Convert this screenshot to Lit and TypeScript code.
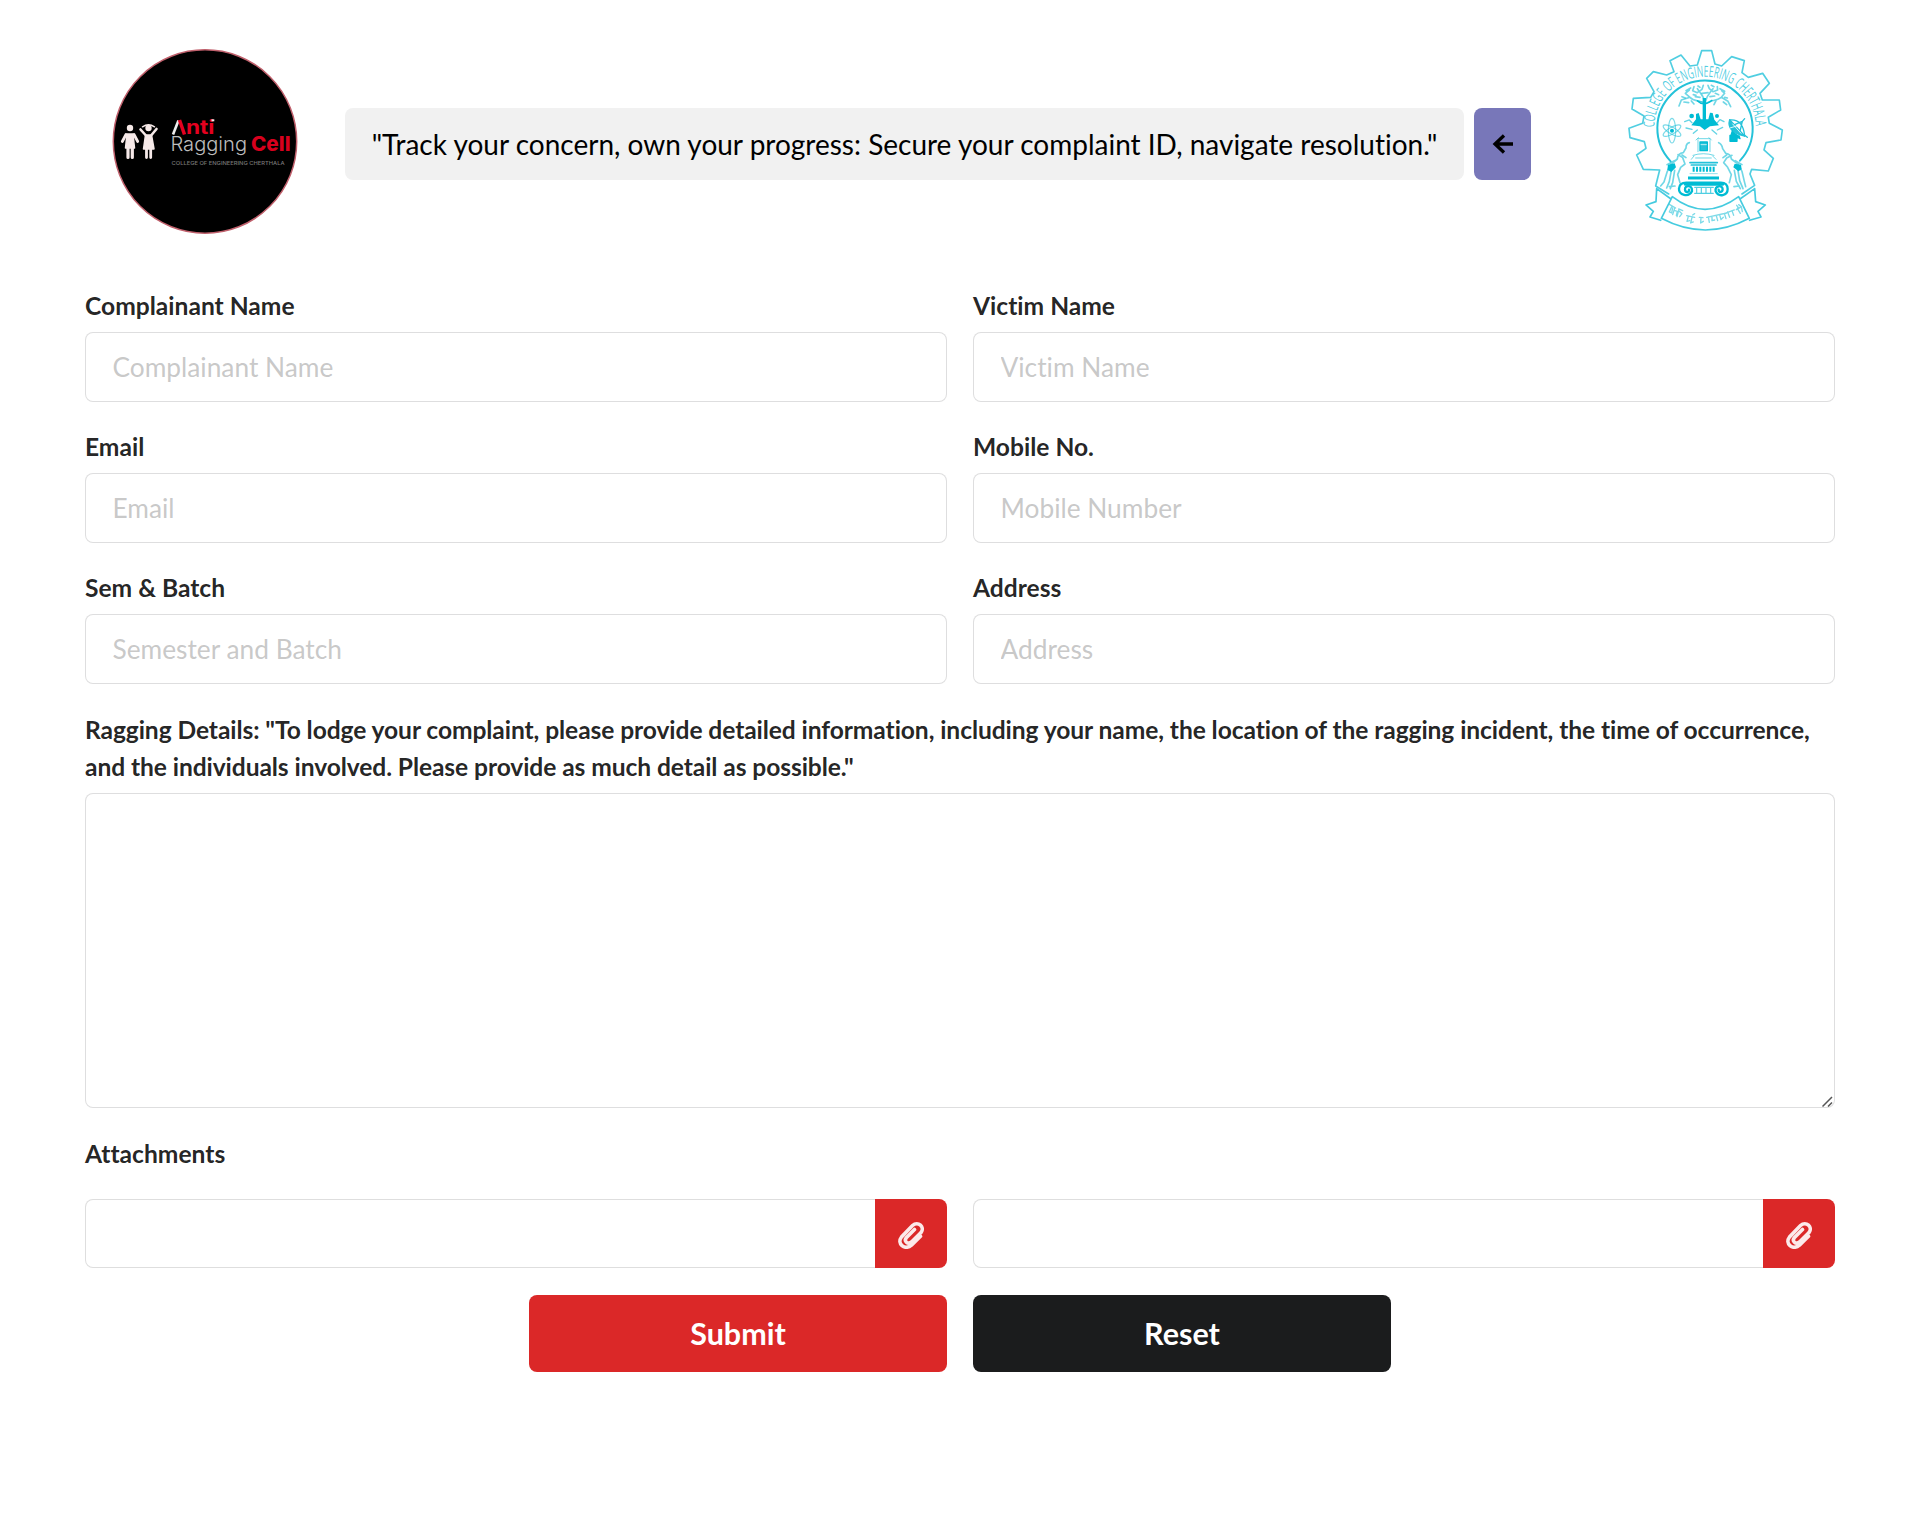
import { LitElement, html, css, svg } from "lit";
import { customElement } from "lit/decorators.js";

/** Gear outline, open at the bottom where the ribbon sits. */
const GEAR =
  "M176 462L137 438 149 390 100 388 80 345 108 325 103 305 60 293 57 265 98 250 102 228 66 207 70 175 122 172 132 155 110 115 130 95 170 105 192 95 180 62 213 45 240 78 262 75 275 32 305 32 315 72 335 78 365 50 403 62 396 98 415 112 458 100 478 130 450 160 457 180 508 180 512 210 475 232 478 250 517 270 513 300 468 308 462 330 490 355 475 393 425 388 420 402 434 436 396 462";

@customElement("app-root")
export class AppRoot extends LitElement {
  static styles = css`
    :host { display: block; font-family: Lato, "Liberation Sans", sans-serif; font-variant-ligatures: none; background: #fff; color: rgba(0,0,0,.87); }
    * { box-sizing: border-box; }
    .page { padding: 46px 85px 0; height: 1535px; }
    .header { display: flex; align-items: center; height: 190px; padding-left: 25px; }
    .logo { width: 190px; height: 190px; flex: none; }
    .statement { margin: 6px 0 0 45px; width: 1119px; height: 72px; background: #f1f1f1; border-radius: 8px; display: flex; align-items: center; justify-content: center; font-size: 28px; color: #000; white-space: nowrap; }
    .back { margin: 6px 0 0 10px; width: 57px; height: 72px; border: 0; padding: 0; border-radius: 8px; background: #7877b9; display: flex; align-items: center; justify-content: center; }
    .emblem { width: 190px; height: 200px; margin: -2px 0 0 79px; flex: none; }
    .form { margin-top: 50.500px; display: grid; grid-template-columns: 1fr 1fr; column-gap: 26px; }
    .field { height: 141px; display: flex; flex-direction: column; }
    .label { font-weight: 700; font-size: 24.600px; line-height: 37.400px; display: block; }
    .long { letter-spacing: -.085px; padding-top: 1px; }
    .input { font: 400 26.300px/32px Lato, sans-serif; font-variant-ligatures: none; height: 70px; width: 100%; margin-top: 8px; padding: 0 26.500px; border: 1px solid rgba(34,36,38,.15); border-radius: 8px; outline: 0; background: #fff; }
    .input::placeholder { color: rgba(191,191,191,.87); }
    .wide { grid-column: 1 / -1; }
    .area-box { position: relative; margin-top: 7.500px; }
    .area { display: block; width: 100%; height: 315.500px; border: 1px solid rgba(34,36,38,.15); border-radius: 8px; resize: none; outline: 0; }
    .grip { position: absolute; right: 2px; bottom: 1px; width: 11px; height: 11px; }
    .attach { margin-top: 26.600px; height: 64px; }
    .file { display: flex; height: 69.500px; }
    .file .input { margin: 0; flex: 1; min-width: 0; height: auto; border-right: 0; border-radius: 8px 0 0 8px; }
    .clip { width: 72px; border: 0; padding: 2px 0 0; background: #db2828; border-radius: 0 8px 8px 0; display: flex; align-items: center; justify-content: center; }
    .actions { display: flex; justify-content: center; gap: 26px; margin-top: 26.500px; }
    .btn { width: 418px; height: 77px; border: 0; border-radius: 8px; color: #fff; font: 700 30.500px/1 Lato, sans-serif; }
    .submit { background: #db2828; }
    .reset { background: #1b1c1d; }
    .wordmark { font-family: Inter, Lato, sans-serif; }
    .motto { font-family: "Open Sans", Lato, sans-serif; }
  `;

  private field(label: string, placeholder: string) {
    return html`<label class="field"><span class="label">${label}</span><input class="input" placeholder=${placeholder} /></label>`;
  }

  private file() {
    return html`<div class="file"><input class="input" readonly aria-label="Attachment" /><button class="clip" aria-label="Attach">
      <svg width="26" height="28" viewBox="0 0 26 28" fill="none" stroke="#fff" stroke-opacity=".9" stroke-width="3.600" stroke-linecap="round">
        <path d="M22.500 15.200L13.500 24.200C6.500 30 -1.500 22.500 3.500 16L14.500 4.500C20 -.500 27.500 6 22.800 11.800L13.500 21C9.500 24 5.500 20 8.500 16.500L16.500 8.500"/>
      </svg></button></div>`;
  }

  private logo() {
    return svg`
      <circle cx="105" cy="101.500" r="91.700" fill="#000" stroke="#c0606c" stroke-width="1.500"/>
      <g fill="#f6e9e8" stroke="#f6e9e8" stroke-linecap="round" stroke-linejoin="round">
        <circle cx="30" cy="88" r="3.200" stroke="none"/>
        <path d="M27 94H33L34.500 108H25.500Z" stroke-width="1.500"/>
        <path d="M26 94.500L22.300 101.500M34 94.500L37.700 101.500" stroke-width="2.800" fill="none"/>
        <path d="M28 108V117.500M32.300 108V117.500" stroke-width="3.200" fill="none"/>
        <circle cx="48.500" cy="88" r="3.200" stroke="none"/>
        <path d="M45.500 95H51.500L54 109H43.500Z" stroke-width="1.500"/>
        <path d="M45.500 95L40.500 89.500M51.500 95L56.500 89" stroke-width="2.600" fill="none"/>
        <path d="M42.500 86.800Q48.500 82.800 54.500 86.800" stroke-width="1.500" fill="none"/>
        <path d="M46.500 109V117.500M50.700 109V117.500" stroke-width="2.800" fill="none"/>
      </g>
      <path d="M73 94.500L78.500 80.500" stroke="#eee" stroke-width="2.600"/>
      <path d="M79.500 80L84.500 94.500" stroke="#e4001f" stroke-width="3.500"/>
      <g class="wordmark">
        <text x="86" y="94.300" font-size="19" font-weight="700" fill="#e4001f" textLength="28.500" lengthAdjust="spacingAndGlyphs">nti</text>
        <text x="70.500" y="111" font-size="20" font-weight="300" fill="#bdbdbd" textLength="76.500" lengthAdjust="spacingAndGlyphs">Ragging</text>
        <text x="151" y="111" font-size="20.500" font-weight="800" fill="#d8001d" textLength="39.500" lengthAdjust="spacingAndGlyphs">Cell</text>
        <text x="71.500" y="124.500" font-size="5.400" font-weight="500" fill="#777" textLength="113" lengthAdjust="spacingAndGlyphs">COLLEGE OF ENGINEERING CHERTHALA</text>
      </g>
      <path d="M111.500 80.300H114.300" stroke="#eee" stroke-width="2"/>`;
  }

  private emblem() {
    return svg`
      <defs><path id="rim" d="M133 262A152 152 0 0 1 437 262"/></defs>
      <g transform="scale(.3333)" fill="none" stroke="#24c2d9" stroke-width="4" stroke-linejoin="round" stroke-linecap="round">
        <path d=${GEAR} stroke-opacity=".8" stroke-width="5"/>
        <path d="M182 364A143 143 0 1 1 390 362" stroke-width="6"/>
        <text class="motto" fill="#24c2d9" fill-opacity=".8" stroke="none" font-size="46"><textPath href="#rim" textLength="474" lengthAdjust="spacingAndGlyphs">COLLEGE OF ENGINEERING CHERTHALA</textPath></text>

        <!-- tree -->
        <g stroke-width="5" stroke-opacity=".65">
          <path d="M282 190C268 180 252 185 240 172M284 188C282 165 270 160 262 146M286 186C290 165 300 158 309 146M288 190C305 178 318 185 334 172M240 172L214 180 207 198M240 172L226 160 238 150M262 158L248 152 252 140M262 158L276 148 280 136M309 155L298 146 294 136M309 155L323 150 322 140M334 172L344 160 335 152M334 172L354 184 362 200M222 186L236 188M340 186L350 194M244 183L252 192M318 182L312 194M228 152L242 144M330 146L344 154"/>
          <path d="M256 170L270 172M300 170L314 168M266 184L278 186M250 164L258 166M316 160L326 164M276 160L294 158M216 170L226 174M344 172L352 174M264 138L270 142M304 136L312 140"/>
        </g>
        <path d="M283 174V242" stroke="#00bcd4" stroke-width="10" stroke-linecap="butt"/>
        <path d="M262 182Q282 202 306 181" stroke="#00bcd4" stroke-width="4"/>
        <path d="M244 256L258 238 258 222 266 219 272 238 295 238 300 218 308 219 313 239 327 256 300 259 284 270 270 259Z" fill="#00bcd4" stroke="none"/>
        <g fill="#00bcd4" stroke="none"><circle cx="245" cy="228" r="7"/><circle cx="321" cy="228" r="6"/></g>
        <path d="M224 245L238 240 246 248M342 245L330 239 322 248M228 264L246 268M250 280L262 270M322 270L338 262M306 270L320 282" stroke-opacity=".7"/>

        <!-- atom -->
        <g stroke-width="3.500" stroke-opacity=".6">
          <ellipse cx="186" cy="272" rx="30" ry="10" transform="rotate(30 186 272)"/>
          <ellipse cx="186" cy="272" rx="30" ry="10" transform="rotate(-30 186 272)"/>
          <ellipse cx="186" cy="272" rx="37" ry="11" transform="rotate(90 186 272)"/>
        </g>
        <circle cx="186" cy="272" r="6" fill="#00bcd4" stroke="none"/>

        <!-- dish -->
        <path d="M359 239Q348 276 404 288Z" fill="#24c2d9"/>
        <path d="M360 240Q399 237 404 288M374 254L397 244 390 274M397 244L404 236" stroke-width="4"/>
        <path d="M367 273L363 286H360V304H381V291L390 296 387 287" fill="#00bcd4" stroke="#00bcd4"/>
        <path d="M368 252L393 280M360 264L380 258" stroke="#fff" stroke-width="2.500"/>
        <path d="M404 286L412 292"/>

        <!-- monument -->
        <path d="M263 296H300M258 300L266 293M304 300L297 293M264 335V300M300 335V300M249 346Q280 336 312 346M244 358L252 348M308 348L318 358M257 354H304" stroke-width="3" stroke-opacity=".65"/>
        <rect x="270" y="306" width="22" height="26" fill="#24c2d9" stroke="#00bcd4"/>
        <path d="M273 314H289" stroke="#bceff5" stroke-width="3"/>
        <path d="M240 368H322M244 375H318" stroke-width="5"/>
        <path d="M251 380V395M261 380V395M271 380V395M281 380V395M291 380V395M301 380V395M311 380V395" stroke="#00bcd4" stroke-width="6" stroke-linecap="butt"/>
        <path d="M240 401H322" stroke-width="3" stroke-opacity=".5"/>
        <path d="M234 414H327" stroke="#00bcd4" stroke-width="9" stroke-linecap="butt"/>
        <path d="M246 452C247 434 224 435 225 449C226 459 239 458 237 449M246 454C236 473 206 466 207 446C208 430 220 428 229 428H333C346 428 353 436 353 447C353 467 326 473 317 454C314 436 337 434 338 447C338 458 325 458 326 449" stroke="#00bcd4" stroke-width="7"/>
        <path d="M226 433H338" stroke="#00bcd4" stroke-width="9"/>
        <path d="M254 442H310M254 460H310M260 445V458M274 445V458M288 445V458M302 445V458" stroke-width="3.500" stroke-opacity=".8"/>

        <!-- figures at the sides -->
        <g stroke-opacity=".65" stroke-width="5">
          <path d="M238 308Q228 310 228 324L220 338Q203 340 202 357L184 372 172 394 162 426 152 438M204 344L218 353 225 372 212 382 203 404 210 428M216 345L228 353M185 386L178 424 170 444M194 391L188 428 181 446M171 374L193 362M178 440L195 438"/>
          <path d="M326 308Q336 312 338 326L347 340Q363 342 364 357L384 372 396 394 403 424 407 440M366 346L350 354 341 368 353 382 364 404 358 428M350 345L339 353M383 386L389 422 399 446M373 391L379 424 391 446M396 374L376 362M372 440L388 438"/>
        </g>
        <path d="M174 374L194 370 198 382 184 396 172 389ZM374 371L393 374 395 388 385 394 370 382Z" fill="#00bcd4" stroke="none"/>

        <!-- ribbon -->
        <path d="M187 470Q284 546 386 470L418 535Q286 605 154 535ZM140 446L138 485 108 495 130 514 120 531 152 541M434 446L437 485 466 495 444 514 453 531 419 541M140 446L183 477M434 446L390 477" stroke-width="5" stroke-opacity=".85"/>
        <g stroke-width="4" stroke-opacity=".6">
          <path d="M178 493L197 504M185 500L178 516 185 519 188 504M194 505L188 524M195 512L202 514 199 526M207 508L201 530M207 513L216 521 209 530M206 507L218 512M230 527L254 532M235 529L231 544 239 542M246 532L242 549 250 546M248 525L254 521M268 532L279 533M273 533L272 549 280 544M290 532L350 519M295 531L298 547M306 529V542L314 540M319 527L323 542M329 524L333 539 340 532M343 520L348 536M353 516L359 532M349 519L373 510M366 512L371 526M382 505L391 520M379 509L391 502M386 494L394 500 397 515M380 496L386 504"/>
        </g>
      </g>`;
  }

  render() {
    return html`<div class="page">
      <header class="header">
        <svg class="logo" viewBox="10 6 190 190">${this.logo()}</svg>
        <div class="statement">"Track your concern, own your progress: Secure your complaint ID, navigate resolution."</div>
        <button class="back" aria-label="Back"><svg width="22" height="20" viewBox="0 0 22 20" fill="none" stroke="#000" stroke-width="3.300"><path d="M12 1.500L3 10L12 18.500M3 10H21"/></svg></button>
        <svg class="emblem" viewBox="0 0 190 200">${this.emblem()}</svg>
      </header>
      <div class="form">
        ${this.field("Complainant Name", "Complainant Name")}${this.field("Victim Name", "Victim Name")}
        ${this.field("Email", "Email")}${this.field("Mobile No.", "Mobile Number")}
        ${this.field("Sem & Batch", "Semester and Batch")}${this.field("Address", "Address")}
        <label class="wide"><span class="label long">Ragging Details: "To lodge your complaint, please provide detailed information, including your name, the location of the ragging incident, the time of occurrence, and the individuals involved. Please provide as much detail as possible."</span>
          <div class="area-box"><textarea class="area"></textarea><svg class="grip" viewBox="0 0 11 11" fill="none" stroke="#555" stroke-width="1.500"><path d="M.500 10.500L10 1M6 10.500L10 6.500"/></svg></div></label>
        <div class="wide attach"><span class="label">Attachments</span></div>
        ${this.file()}${this.file()}
      </div>
      <div class="actions"><button class="btn submit">Submit</button><button class="btn reset">Reset</button></div>
    </div>`;
  }
}
